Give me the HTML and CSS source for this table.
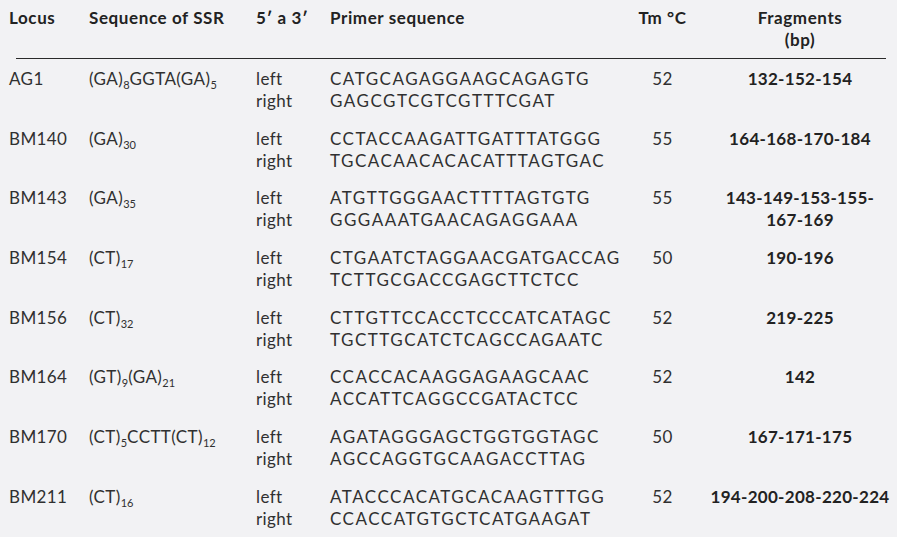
FILE: index.html
```html
<!DOCTYPE html>
<html>
<head>
<meta charset="utf-8">
<link rel="stylesheet" href="styles.css">
</head>
<body>
<div class="table">
  <div class="row head">
    <div class="c locus">Locus</div>
    <div class="c seq">Sequence of SSR</div>
    <div class="c dir">5′ a 3′</div>
    <div class="c primer-h">Primer sequence</div>
    <div class="c tm">Tm °C</div>
    <div class="c frag">Fragments<br>(bp)</div>
  </div>
  <div class="rule"></div>
  <div class="row">
    <div class="c locus">AG1</div>
    <div class="c seq">(GA)<sub>8</sub>GGTA(GA)<sub>5</sub></div>
    <div class="c dir">left<br>right</div>
    <div class="c primer">CATGCAGAGGAAGCAGAGTG<br>GAGCGTCGTCGTTTCGAT</div>
    <div class="c tm">52</div>
    <div class="c frag b">132-152-154</div>
  </div>
  <div class="row">
    <div class="c locus">BM140</div>
    <div class="c seq">(GA)<sub>30</sub></div>
    <div class="c dir">left<br>right</div>
    <div class="c primer">CCTACCAAGATTGATTTATGGG<br>TGCACAACACACATTTAGTGAC</div>
    <div class="c tm">55</div>
    <div class="c frag b">164-168-170-184</div>
  </div>
  <div class="row">
    <div class="c locus">BM143</div>
    <div class="c seq">(GA)<sub>35</sub></div>
    <div class="c dir">left<br>right</div>
    <div class="c primer">ATGTTGGGAACTTTTAGTGTG<br>GGGAAATGAACAGAGGAAA</div>
    <div class="c tm">55</div>
    <div class="c frag b">143-149-153-155-<br>167-169</div>
  </div>
  <div class="row">
    <div class="c locus">BM154</div>
    <div class="c seq">(CT)<sub>17</sub></div>
    <div class="c dir">left<br>right</div>
    <div class="c primer">CTGAATCTAGGAACGATGACCAG<br>TCTTGCGACCGAGCTTCTCC</div>
    <div class="c tm">50</div>
    <div class="c frag b">190-196</div>
  </div>
  <div class="row">
    <div class="c locus">BM156</div>
    <div class="c seq">(CT)<sub>32</sub></div>
    <div class="c dir">left<br>right</div>
    <div class="c primer">CTTGTTCCACCTCCCATCATAGC<br>TGCTTGCATCTCAGCCAGAATC</div>
    <div class="c tm">52</div>
    <div class="c frag b">219-225</div>
  </div>
  <div class="row">
    <div class="c locus">BM164</div>
    <div class="c seq">(GT)<sub>9</sub>(GA)<sub>21</sub></div>
    <div class="c dir">left<br>right</div>
    <div class="c primer">CCACCACAAGGAGAAGCAAC<br>ACCATTCAGGCCGATACTCC</div>
    <div class="c tm">52</div>
    <div class="c frag b">142</div>
  </div>
  <div class="row">
    <div class="c locus">BM170</div>
    <div class="c seq">(CT)<sub>5</sub>CCTT(CT)<sub>12</sub></div>
    <div class="c dir">left<br>right</div>
    <div class="c primer">AGATAGGGAGCTGGTGGTAGC<br>AGCCAGGTGCAAGACCTTAG</div>
    <div class="c tm">50</div>
    <div class="c frag b">167-171-175</div>
  </div>
  <div class="row">
    <div class="c locus">BM211</div>
    <div class="c seq">(CT)<sub>16</sub></div>
    <div class="c dir">left<br>right</div>
    <div class="c primer">ATACCCACATGCACAAGTTTGG<br>CCACCATGTGCTCATGAAGAT</div>
    <div class="c tm">52</div>
    <div class="c frag b">194-200-208-220-224</div>
  </div>
</div>
</body>
</html>
```
FILE: styles.css
```css
html, body {
  margin: 0;
  padding: 0;
  background: #f2f2f4;
}
body {
  font-family: Lato, "Open Sans", sans-serif;
  font-size: 17px;
  color: #303030;
  width: 897px;
  height: 537px;
  overflow: hidden;
}
.table {
  padding: 7px 0 0 9px;
}
.row {
  display: grid;
  grid-template-columns: 80px 167px 74px 295px 75px 200px;
  line-height: 22px;
  height: 59.7px;
  white-space: nowrap;
  letter-spacing: 0.4px;
}
.row.head {
  height: 51px;
  font-weight: bold;
  color: #222;
  letter-spacing: 0.6px;
}
.rule {
  height: 1px;
  background: #2a2a2a;
  margin: 0 11px 9px 7px;
}
.primer {
  letter-spacing: 1.5px;
}
.tm, .frag {
  text-align: center;
}
.b {
  font-weight: bold;
  color: #222;
  letter-spacing: 0.3px;
}
sub {
  font-size: 11px;
  line-height: 0;
  vertical-align: -4px;
  letter-spacing: 0;
}
```
